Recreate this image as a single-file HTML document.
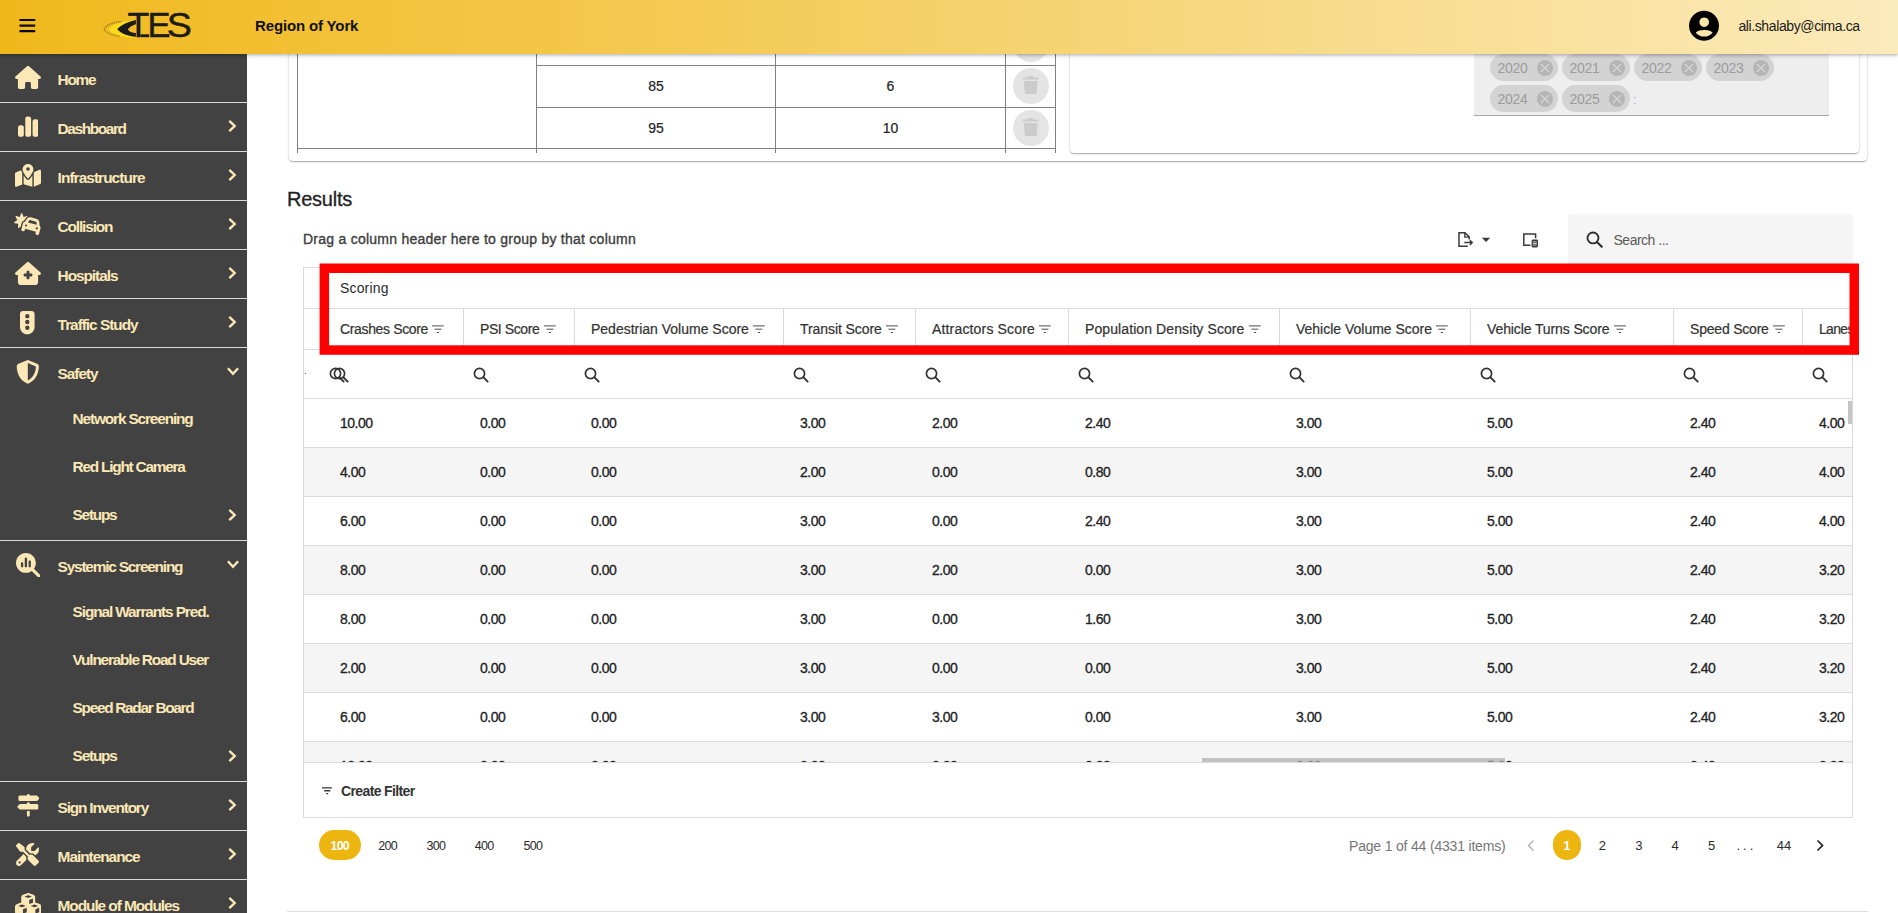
<!DOCTYPE html>
<html lang="en"><head><meta charset="utf-8"><title>TES - Region of York</title>
<style>
html,body{margin:0;padding:0}
body{width:1898px;height:913px;overflow:hidden;background:#fff;position:relative;font-family:"Liberation Sans",sans-serif;color:#333;font-size:14px}
.abs,header *,nav *,main *{box-sizing:border-box}
header{position:absolute;left:0;top:0;width:1898px;height:54px;background:linear-gradient(90deg,#f0b81a 0%,#fbeabb 100%);box-shadow:0 1px 4px rgba(0,0,0,.35);z-index:30}
header span,header svg,header div{position:absolute}
nav{position:absolute;left:0;top:54px;width:247px;height:859px;background:#424242;z-index:20;overflow:hidden}
nav ul{list-style:none;margin:0;padding:0}
nav li{position:relative;height:48px;color:#fff;font-weight:700;font-size:15px}
nav li.top{border-bottom:1px solid #dadada;height:49px}
nav li.grp{border-bottom:1px solid #dadada}
nav li span{position:absolute;white-space:nowrap}
nav li svg{position:absolute}
main{position:absolute;left:0;top:0;width:1898px;height:913px;overflow:hidden;z-index:1}
main span,main div,main svg,main table{position:absolute;white-space:nowrap}

#grid{left:303px;top:267px;width:1550px;height:551px;border:1px solid #dbdbdb}
#grid table{left:0;top:0;border-collapse:separate;border-spacing:0;table-layout:fixed;width:1548px;color:#2a2a2a;font-size:14px}
#grid td,#grid th{position:relative;padding:0 0 0 16px;border-bottom:1px solid #dbdbdb;text-align:left;font-weight:400;overflow:hidden;white-space:nowrap;vertical-align:middle}
#grid tr.h1 th,#grid tr.h2 th{height:41px}
#grid tr.h2 th{border-right:1px solid #dbdbdb;color:#333;-webkit-text-stroke:0.22px #333}
#grid tr.h2 th:last-child{border-right:0}
#grid tr.f td{height:49px}
#grid tr.d td{height:49px;color:#222;-webkit-text-stroke:0.3px #222}
#grid tr.alt td{background:#f5f5f5}
#grid .fi{position:static;display:inline-block;margin-left:4.200px;vertical-align:0.300px}
#grid .si{top:17.200px}
#grid th span,#grid td span{position:static}
</style></head><body>
<header>
<svg style="left:19px;top:17.700px" width="17" height="15" viewBox="0 0 17 15"><g fill="#0a0a0a"><rect x="0.400" y="0.900" width="15.900" height="2.200" rx="0.600"/><rect x="0.400" y="6.500" width="15.900" height="2.200" rx="0.600"/><rect x="0.400" y="12.100" width="15.900" height="2.200" rx="0.600"/></g></svg>
<svg style="left:100px;top:8px" width="96" height="36" viewBox="100 8 96 36" aria-label="TES logo">
<path d="M104.2 29.6 C105.5 25.2 113 21.9 121.5 21.6" fill="none" stroke="#6b5a10" stroke-width="1.6" stroke-dasharray="0.9 0.9" opacity=".75"/>
<path d="M104.2 29.6 C106.5 33.2 113 35.4 120 36.2" fill="none" stroke="#6b5a10" stroke-width="1.4" stroke-dasharray="0.9 0.9" opacity=".7"/>
<path d="M108.8 29.4 C112 24.6 122 21.4 135.8 20.1 C128 23.5 121 26.5 119 29.3 C121 32.6 128 35.6 135.8 37.6 C122 37.2 112 34.2 108.8 29.4 Z" fill="#fadc1c"/>
<path d="M117.2 29.3 C121.5 24.6 128.5 21.7 135.9 20 L135.9 24.2 C132 25.4 128.9 27.2 127.9 29.4 C129 31.6 132 32.6 135.9 33 L135.9 36.8 C128.5 36.3 121 33.6 117.2 29.3 Z" fill="#1b1b1b"/>
<rect x="140.4" y="34.3" width="8.8" height="2.9" fill="#1b1b1b"/>
<g font-family="Liberation Sans, sans-serif" font-size="34.3" fill="#1b1b1b" stroke="#1b1b1b" stroke-width="0.42">
<text transform="translate(127.4 37) scale(1.04 1)">T</text>
<text transform="translate(147.5 37) scale(1.01 1)">E</text>
<text transform="translate(166.8 37) scale(1.1 1)">S</text></g>
</svg>
<span style="left:255px;top:15.8px;font-size:15px;line-height:20px;font-weight:700;color:#111;letter-spacing:-0.143px;white-space:nowrap;">Region of York</span>
<svg style="left:1686px;top:8px" width="36" height="36" viewBox="1686 8 36 36"><path fill="#000" fill-rule="evenodd" d="M1704 10.8 a15 15 0 1 0 0.010 0 Z M1704.200 17.400 a4.800 4.800 0 1 0 0.010 0 Z M1695.800 32.700 C1697 30.700 1701.500 30 1704.200 30 C1706.900 30 1711.400 30.700 1712.600 32.700 C1710.800 35.100 1707.800 36.600 1704.200 36.600 C1700.600 36.600 1697.600 35.100 1695.800 32.700 Z"/></svg>
<span style="left:1738.4px;top:16.8px;font-size:14px;line-height:18px;color:#1a1a1a;letter-spacing:-0.385px;white-space:nowrap;">ali.shalaby@cima.ca</span>
</header>
<nav><ul>
<li class="top"><svg style="left:14.8px;top:12.3px" width="26" height="23.1" viewBox="0 0 576 512" fill="#fbe8b6"><path d="M575.800 255.500c0 18-15 32.100-32 32.100h-32l.7 160.200c0 2.700-.2 5.400-.5 8.100V472c0 22.100-17.900 40-40 40H456c-1.100 0-2.200 0-3.300-.1c-1.400 .1-2.800 .1-4.200 .1H416 392c-22.100 0-40-17.900-40-40V448 384c0-17.700-14.300-32-32-32H256c-17.700 0-32 14.300-32 32v64 24c0 22.100-17.900 40-40 40H160 128.100c-1.500 0-3-.1-4.500-.2c-1.200 .1-2.400 .2-3.600 .2H104c-22.100 0-40-17.900-40-40V360c0-.9 0-1.900 .1-2.800V287.600H32c-18 0-32-14-32-32.100c0-9 3-17 10-24L266.400 8c7-7 15-8 22-8s15 2 21 7L564.800 231.500c8 7 12 15 11 24z"/></svg><span style="left:57.6px;top:16px;font-size:15.4px;line-height:20px;font-weight:700;color:#fbe8b6;letter-spacing:-1.266px;">Home</span></li>
<li class="top"><svg style="left:17.8px;top:12.2px" width="20.4" height="23.3" viewBox="0 0 448 512" fill="#fbe8b6"><path d="M160 80c0-26.500 21.500-48 48-48h32c26.500 0 48 21.500 48 48V432c0 26.500-21.500 48-48 48H208c-26.500 0-48-21.500-48-48V80zM0 272c0-26.500 21.500-48 48-48H80c26.500 0 48 21.500 48 48V432c0 26.500-21.500 48-48 48H48c-26.500 0-48-21.500-48-48V272zM368 96h32c26.500 0 48 21.500 48 48V432c0 26.500-21.500 48-48 48H368c-26.500 0-48-21.500-48-48V144c0-26.500 21.500-48 48-48z"/></svg><span style="left:57.6px;top:16px;font-size:15.4px;line-height:20px;font-weight:700;color:#fbe8b6;letter-spacing:-1.377px;">Dashboard</span><svg style="left:227px;top:15.2px" width="11" height="16" viewBox="0 0 11 16"><path d="M2.300 2.900 L7.700 8 L2.300 13.100" fill="none" stroke="#fbe8b6" stroke-width="2.4" stroke-linecap="butt" stroke-linejoin="miter"/></svg></li>
<li class="top"><svg style="left:15px;top:11.8px" width="26" height="23.1" viewBox="0 0 576 512" fill="#fbe8b6"><path d="M408 120c0 54.600-73.100 151.900-105.200 192c-7.700 9.600-22 9.600-29.600 0C241.100 271.900 168 174.600 168 120C168 53.700 221.700 0 288 0s120 53.700 120 120zm8 80.400c3.500-6.900 6.700-13.800 9.600-20.600c.5-1.200 1-2.500 1.500-3.700l116-46.400C558.900 123.400 576 135 576 152V422.800c0 9.800-6 18.600-15.100 22.300L416 503V200.400zM137.600 138.300c2.400 14.100 7.200 28.300 12.800 41.500c2.900 6.800 6.100 13.700 9.600 20.600V451.800L32.900 502.700C17.100 509 0 497.400 0 480.400V209.600c0-9.800 6-18.600 15.100-22.300l122.600-49zM327.800 332c13.900-17.400 35.700-45.700 56.200-77V504.300L192 449.400V255c20.500 31.300 42.300 59.600 56.200 77c20.500 25.600 59.100 25.600 79.600 0zM288 152a40 40 0 1 0 0-80 40 40 0 1 0 0 80z"/></svg><span style="left:57.6px;top:16px;font-size:15.4px;line-height:20px;font-weight:700;color:#fbe8b6;letter-spacing:-0.933px;">Infrastructure</span><svg style="left:227px;top:15.2px" width="11" height="16" viewBox="0 0 11 16"><path d="M2.300 2.900 L7.700 8 L2.300 13.100" fill="none" stroke="#fbe8b6" stroke-width="2.4" stroke-linecap="butt" stroke-linejoin="miter"/></svg></li>
<li class="top"><svg style="left:13.5px;top:12px" width="28" height="22.4" viewBox="0 0 640 512" fill="#fbe8b6"><path d="M176 8c-6.600 0-12.400 4-14.900 10.100l-29.400 74L55.600 68.900c-6.300-1.900-13.100 .2-17.200 5.300s-4.600 12.200-1.400 17.900l39.500 69.100L10.900 206.400c-5.400 3.700-8 10.300-6.500 16.700s6.700 11.200 13.100 12.200l78.700 12.200L90.600 327c-.5 6.500 3.100 12.700 9 15.500s12.900 1.800 17.800-2.600l35.300-32.500 9.500-35.400 10.400-38.600c8-29.900 30.500-52.100 57.900-60.900l41-59.200c11.300-16.300 26.400-28.900 43.500-37.200c-.4-.6-.8-1.200-1.300-1.800c-4.100-5.100-10.900-7.200-17.200-5.300L220.300 92.100l-29.400-74C188.400 12 182.600 8 176 8zM367.700 161.500l135.600 36.300c6.500 1.800 11.300 7.400 11.800 14.200l4.600 56.500-201.500-54 32.200-46.600c3.800-5.600 10.800-8.100 17.300-6.400zm-69.900-30l-47.900 69.300c-21.600 3-40.300 18.600-46.300 41l-10.400 38.600-16.600 61.800-8.300 30.900c-4.600 17.100 5.600 34.600 22.600 39.200l15.500 4.100c17.100 4.600 34.600-5.600 39.200-22.600l8.300-30.900 247.300 66.300-8.300 30.900c-4.600 17.100 5.600 34.600 22.600 39.200l15.500 4.100c17.100 4.600 34.600-5.600 39.200-22.600l8.300-30.900L595 388l10.400-38.600c6-22.400-2.500-45.200-19.600-58.700l-6.800-84c-2.700-33.700-26.400-62-59-70.800L384.200 99.700c-32.700-8.800-67.400 4-86.500 31.800zm-17 131a24 24 0 1 1 -12.400 46.400 24 24 0 1 1 12.400-46.400zm217.900 83.200A24 24 0 1 1 545 358.100a24 24 0 1 1 -46.400-12.400z"/></svg><span style="left:57.6px;top:16px;font-size:15.4px;line-height:20px;font-weight:700;color:#fbe8b6;letter-spacing:-1.143px;">Collision</span><svg style="left:227px;top:15.2px" width="11" height="16" viewBox="0 0 11 16"><path d="M2.300 2.900 L7.700 8 L2.300 13.100" fill="none" stroke="#fbe8b6" stroke-width="2.4" stroke-linecap="butt" stroke-linejoin="miter"/></svg></li>
<li class="top"><svg style="left:15px;top:12px" width="26" height="23.1" viewBox="0 0 576 512" fill="#fbe8b6"><path d="M543.800 287.600c17 0 32-14 32-32.100c1-9-3-17-11-24L309.500 7c-6-5-14-7-21-7s-15 1-22 8L10 231.500c-7 7-10 15-10 24c0 18 14 32.100 32 32.100h32V448c0 35.300 28.700 64 64 64H448.500c35.500 0 64.200-28.800 64-64.300l-.7-160.200h32zM256 208c0-8.800 7.200-16 16-16h32c8.800 0 16 7.200 16 16v48h48c8.800 0 16 7.200 16 16v32c0 8.800-7.200 16-16 16H320v48c0 8.800-7.200 16-16 16H272c-8.800 0-16-7.200-16-16V320H208c-8.800 0-16-7.200-16-16V272c0-8.800 7.200-16 16-16h48V208z"/></svg><span style="left:57.6px;top:16px;font-size:15.4px;line-height:20px;font-weight:700;color:#fbe8b6;letter-spacing:-1.053px;">Hospitals</span><svg style="left:227px;top:15.2px" width="11" height="16" viewBox="0 0 11 16"><path d="M2.300 2.900 L7.700 8 L2.300 13.100" fill="none" stroke="#fbe8b6" stroke-width="2.4" stroke-linecap="butt" stroke-linejoin="miter"/></svg></li>
<li class="top"><svg style="left:20.1px;top:12.3px" width="14.6" height="23.4" viewBox="0 0 320 512" fill="#fbe8b6"><path d="M64 0C28.700 0 0 28.700 0 64V352c0 88.400 71.600 160 160 160s160-71.600 160-160V64c0-35.300-28.700-64-64-64H64zm96 416a48 48 0 1 1 0-96 48 48 0 1 1 0 96zm48-176a48 48 0 1 1 -96 0 48 48 0 1 1 96 0zm-48-80a48 48 0 1 1 0-96 48 48 0 1 1 0 96z"/></svg><span style="left:57.6px;top:16px;font-size:15.4px;line-height:20px;font-weight:700;color:#fbe8b6;letter-spacing:-1.017px;">Traffic Study</span><svg style="left:227px;top:15.2px" width="11" height="16" viewBox="0 0 11 16"><path d="M2.300 2.900 L7.700 8 L2.300 13.100" fill="none" stroke="#fbe8b6" stroke-width="2.4" stroke-linecap="butt" stroke-linejoin="miter"/></svg></li>
<li><svg style="left:16px;top:12px" width="23.6" height="23.6" viewBox="0 0 512 512" fill="#fbe8b6"><path d="M256 0c4.600 0 9.200 1 13.400 2.900L457.700 82.800c22 9.300 38.400 31 38.300 57.200c-.5 99.200-41.300 280.700-213.600 363.200c-16.700 8-36.100 8-52.800 0C57.300 420.700 16.500 239.200 16 140c-.1-26.200 16.300-47.900 38.300-57.200L242.700 2.900C246.800 1 251.400 0 256 0zm0 66.800V444.800C394 378 431.100 230.100 432 141.400L256 66.800l0 0z"/></svg><span style="left:57.6px;top:16px;font-size:15.4px;line-height:20px;font-weight:700;color:#fbe8b6;letter-spacing:-1.034px;">Safety</span><svg style="left:225px;top:18.0px" width="16" height="11" viewBox="0 0 16 11"><path d="M2.900 2.300 L8 7.700 L13.100 2.300" fill="none" stroke="#fbe8b6" stroke-width="2.4"/></svg></li>
<li><span style="left:72.6px;top:13px;font-size:15.4px;line-height:20px;font-weight:700;color:#fbe8b6;letter-spacing:-1.142px;">Network Screening</span></li>
<li><span style="left:72.6px;top:13px;font-size:15.4px;line-height:20px;font-weight:700;color:#fbe8b6;letter-spacing:-1.231px;">Red Light Camera</span></li>
<li class="grp" style="height:49px"><span style="left:72.6px;top:13px;font-size:15.4px;line-height:20px;font-weight:700;color:#fbe8b6;letter-spacing:-1.252px;">Setups</span><svg style="left:227px;top:15px" width="11" height="16" viewBox="0 0 11 16"><path d="M2.300 2.900 L7.700 8 L2.300 13.100" fill="none" stroke="#fbe8b6" stroke-width="2.4" stroke-linecap="butt" stroke-linejoin="miter"/></svg></li>
<li><svg style="left:15.7px;top:11.8px" width="24.4" height="24.4" viewBox="0 0 512 512" fill="#fbe8b6"><path d="M416 208c0 45.900-14.900 88.300-40 122.700L502.600 457.400c12.500 12.500 12.500 32.800 0 45.300s-32.800 12.500-45.300 0L330.700 376c-34.400 25.200-76.800 40-122.700 40C93.100 416 0 322.900 0 208S93.100 0 208 0S416 93.100 416 208zm-312 8v64c0 13.300 10.700 24 24 24s24-10.700 24-24V216c0-13.300-10.700-24-24-24s-24 10.700-24 24zm80-96V280c0 13.300 10.700 24 24 24s24-10.700 24-24V120c0-13.300-10.700-24-24-24s-24 10.700-24 24zm80 64v96c0 13.300 10.700 24 24 24s24-10.700 24-24V184c0-13.300-10.700-24-24-24s-24 10.700-24 24z"/></svg><span style="left:57.6px;top:16px;font-size:15.4px;line-height:20px;font-weight:700;color:#fbe8b6;letter-spacing:-1.199px;">Systemic Screening</span><svg style="left:225px;top:18.0px" width="16" height="11" viewBox="0 0 16 11"><path d="M2.900 2.300 L8 7.700 L13.100 2.300" fill="none" stroke="#fbe8b6" stroke-width="2.4"/></svg></li>
<li><span style="left:72.6px;top:13px;font-size:15.4px;line-height:20px;font-weight:700;color:#fbe8b6;letter-spacing:-1.113px;">Signal Warrants Pred.</span></li>
<li><span style="left:72.6px;top:13px;font-size:15.4px;line-height:20px;font-weight:700;color:#fbe8b6;letter-spacing:-1.194px;">Vulnerable Road User</span></li>
<li><span style="left:72.6px;top:13px;font-size:15.4px;line-height:20px;font-weight:700;color:#fbe8b6;letter-spacing:-1.297px;">Speed Radar Board</span></li>
<li class="grp" style="height:49px"><span style="left:72.6px;top:13px;font-size:15.4px;line-height:20px;font-weight:700;color:#fbe8b6;letter-spacing:-1.219px;">Setups</span><svg style="left:227px;top:15px" width="11" height="16" viewBox="0 0 11 16"><path d="M2.300 2.900 L7.700 8 L2.300 13.100" fill="none" stroke="#fbe8b6" stroke-width="2.4" stroke-linecap="butt" stroke-linejoin="miter"/></svg></li>
<li class="top"><svg style="left:16.5px;top:12.3px" width="22.7" height="22.7" viewBox="0 0 512 512" fill="#fbe8b6"><path d="M224 32H64C46.300 32 32 46.300 32 64v64c0 17.700 14.300 32 32 32H441.400c4.200 0 8.300-1.700 11.300-4.700l48-48c6.200-6.200 6.200-16.400 0-22.600l-48-48c-3-3-7.100-4.700-11.300-4.700H288c0-17.700-14.300-32-32-32s-32 14.300-32 32zM480 256c0-17.700-14.300-32-32-32H288V192H224v32H70.600c-4.200 0-8.300 1.700-11.300 4.700l-48 48c-6.200 6.200-6.200 16.400 0 22.600l48 48c3 3 7.100 4.700 11.300 4.700H448c17.700 0 32-14.300 32-32V256zM288 480V384H224v96c0 17.700 14.300 32 32 32s32-14.300 32-32z"/></svg><span style="left:57.6px;top:16px;font-size:15.4px;line-height:20px;font-weight:700;color:#fbe8b6;letter-spacing:-1.172px;">Sign Inventory</span><svg style="left:227px;top:15.2px" width="11" height="16" viewBox="0 0 11 16"><path d="M2.300 2.900 L7.700 8 L2.300 13.100" fill="none" stroke="#fbe8b6" stroke-width="2.4" stroke-linecap="butt" stroke-linejoin="miter"/></svg></li>
<li class="top"><svg style="left:16.3px;top:12.2px" width="23" height="23" viewBox="0 0 512 512" fill="#fbe8b6"><path d="M78.600 5C69.100-2.400 55.600-1.500 47 7L7 47c-8.500 8.500-9.400 22-2.100 31.600l80 104c4.500 5.900 11.600 9.400 19 9.400h54.100l109 109c-14.700 29-10 65.400 14.300 89.600l112 112c12.500 12.500 32.800 12.500 45.300 0l64-64c12.500-12.500 12.500-32.800 0-45.300l-112-112c-24.200-24.200-60.600-29-89.600-14.300l-109-109V104c0-7.500-3.500-14.500-9.400-19L78.600 5zM19.900 396.100C7.200 408.800 0 426.100 0 444.100C0 481.600 30.400 512 67.900 512c18 0 35.300-7.200 48-19.900L233.700 374.300c-7.800-20.900-9-43.600-3.600-65.100l-61.700-61.700L19.900 396.100zM512 144c0-10.500-1.100-20.700-3.200-30.500c-2.400-11.200-16.100-14.100-24.200-6l-63.900 63.900c-3 3-7.100 4.700-11.300 4.700H352c-8.800 0-16-7.200-16-16V102.600c0-4.200 1.700-8.300 4.700-11.300l63.900-63.900c8.100-8.100 5.200-21.800-6-24.200C388.700 1.100 378.500 0 368 0C288.500 0 224 64.500 224 144l0 .8 85.300 85.300c36-9.100 75.800 .5 104 28.700L429 274.500c49-23 83-72.800 83-130.500zM56 432a24 24 0 1 1 48 0 24 24 0 1 1 -48 0z"/></svg><span style="left:57.6px;top:16px;font-size:15.4px;line-height:20px;font-weight:700;color:#fbe8b6;letter-spacing:-1.021px;">Maintenance</span><svg style="left:227px;top:15.2px" width="11" height="16" viewBox="0 0 11 16"><path d="M2.300 2.900 L7.700 8 L2.300 13.100" fill="none" stroke="#fbe8b6" stroke-width="2.4" stroke-linecap="butt" stroke-linejoin="miter"/></svg></li>
<li class="top"><svg style="left:15px;top:12.5px" width="26.4" height="23.5" viewBox="0 0 576 512" fill="#fbe8b6"><path d="M290.800 48.600l78.400 29.700L288 109.500 206.800 78.300l78.400-29.700c1.800-.7 3.800-.7 5.700 0zM136 92.500V204.700c-1.300 .4-2.600 .8-3.900 1.300l-96 36.400C14.400 250.600 0 271.500 0 294.700V413.900c0 22.200 13.100 42.300 33.500 51.300l96 42.200c14.400 6.300 30.700 6.300 45.100 0L288 457.500l113.500 49.900c14.400 6.300 30.700 6.300 45.100 0l96-42.200c20.300-8.900 33.500-29.100 33.500-51.300V294.700c0-23.300-14.400-44.100-36.100-52.400l-96-36.400c-1.300-.5-2.600-.9-3.900-1.300V92.500c0-23.300-14.400-44.100-36.100-52.400l-96-36.400c-12.800-4.800-26.900-4.800-39.700 0l-96 36.400C150.400 48.400 136 69.300 136 92.500zM392 210.600l-82.400 31.200V152.600L392 121v89.600zM154.800 250.900l78.400 29.700L152 311.700 70.800 280.600l78.400-29.700c1.800-.7 3.800-.7 5.700 0zm18.800 204.400V354.800L256 323.200v95.900l-82.400 36.200zM421.200 250.900c1.800-.7 3.800-.7 5.700 0l78.400 29.700L424 311.700l-81.200-31.100 78.400-29.700zM523.200 421.200l-77.600 34.100V354.800L528 323.200v90.700c0 3.200-1.900 6-4.800 7.300z"/></svg><span style="left:57.6px;top:16px;font-size:15.4px;line-height:20px;font-weight:700;color:#fbe8b6;letter-spacing:-1.056px;">Module of Modules</span><svg style="left:227px;top:15.2px" width="11" height="16" viewBox="0 0 11 16"><path d="M2.300 2.900 L7.700 8 L2.300 13.100" fill="none" stroke="#fbe8b6" stroke-width="2.4" stroke-linecap="butt" stroke-linejoin="miter"/></svg></li>
</ul></nav>
<main>
<div style="left:289px;top:-10px;width:1578px;height:171px;border-radius:4px;box-shadow:0 2px 1px -1px rgba(0,0,0,.13),0 1px 1px 0 rgba(0,0,0,.1),0 1px 3px 0 rgba(0,0,0,.12),0 0 1.5px 0 rgba(0,0,0,.2);background:#fff"></div>
<div style="left:1070px;top:-10px;width:789px;height:163px;border-radius:4px;box-shadow:0 2px 1px -1px rgba(0,0,0,.13),0 1px 1px 0 rgba(0,0,0,.1),0 1px 3px 0 rgba(0,0,0,.12),0 0 1.5px 0 rgba(0,0,0,.2);background:#fff"></div>
<div style="left:297px;top:0;width:760px;height:153px;overflow:hidden">
<table style="left:0;top:23px;border-collapse:collapse;table-layout:fixed;width:759px;font-size:14px;color:#222;text-align:center;-webkit-text-stroke:0.2px #222"><colgroup><col style="width:239px"><col style="width:239px"><col style="width:230px"><col style="width:50px"></colgroup><tr style="height:42px"><td rowspan="3" style="border:1px solid #808080;padding:0 0 1.5px 0"></td><td style="border:1px solid #808080;padding:0 0 1.5px 0"></td><td style="border:1px solid #808080;padding:0 0 1.5px 0"></td><td style="border:1px solid #808080;padding:0 0 1.5px 0"></td></tr><tr style="height:42px"><td style="border:1px solid #808080;padding:0 0 1.5px 0">85</td><td style="border:1px solid #808080;padding:0 0 1.5px 0">6</td><td style="border:1px solid #808080;padding:0 0 1.5px 0"></td></tr><tr style="height:41px"><td style="border:1px solid #808080;padding:0.5px 0 0 0">95</td><td style="border:1px solid #808080;padding:0.5px 0 0 0">10</td><td style="border:1px solid #808080;padding:0 0 1.5px 0"></td></tr><tr style="height:42px"><td style="border:1px solid #808080;padding:0 0 1.5px 0"></td><td style="border:1px solid #808080;padding:0 0 1.5px 0"></td><td style="border:1px solid #808080;padding:0 0 1.5px 0"></td><td style="border:1px solid #808080;padding:0 0 1.5px 0"></td></tr></table>
</div>
<div style="left:1013px;top:26px;width:36px;height:36px;border-radius:50%;background:#e4e4e4"><svg style="left:0;top:0" width="36" height="36" viewBox="0 0 36 36"><g fill="#cbcbcb"><rect x="9.800" y="9.500" width="15.800" height="2.100" rx="0.800"/><rect x="14.900" y="8" width="5.500" height="2.200" rx="0.800"/><path d="M10.900 13 L24.500 13 L23.800 25 Q23.700 26.100 22.600 26.100 L13 26.100 Q11.900 26.100 11.800 25 Z"/></g></svg></div>
<div style="left:1013px;top:68px;width:36px;height:36px;border-radius:50%;background:#e4e4e4"><svg style="left:0;top:0" width="36" height="36" viewBox="0 0 36 36"><g fill="#cbcbcb"><rect x="9.800" y="9.500" width="15.800" height="2.100" rx="0.800"/><rect x="14.900" y="8" width="5.500" height="2.200" rx="0.800"/><path d="M10.900 13 L24.500 13 L23.800 25 Q23.700 26.100 22.600 26.100 L13 26.100 Q11.900 26.100 11.800 25 Z"/></g></svg></div>
<div style="left:1013px;top:110px;width:36px;height:36px;border-radius:50%;background:#e4e4e4"><svg style="left:0;top:0" width="36" height="36" viewBox="0 0 36 36"><g fill="#cbcbcb"><rect x="9.800" y="9.500" width="15.800" height="2.100" rx="0.800"/><rect x="14.900" y="8" width="5.500" height="2.200" rx="0.800"/><path d="M10.900 13 L24.500 13 L23.800 25 Q23.700 26.100 22.600 26.100 L13 26.100 Q11.900 26.100 11.800 25 Z"/></g></svg></div>
<div style="left:1474px;top:40px;width:355px;height:76px;background:#eeeeee;border-bottom:1px solid #a8a8a8"></div>
<div style="left:1490px;top:54.2px;width:68px;height:27px;border-radius:14px;background:#d3d3d3"><span style="left:7.5px;top:4.5px;font-size:14px;line-height:18px;color:#9b9b9b;letter-spacing:-0.289px;">2020</span><svg style="left:46.5px;top:5.5px" width="16" height="16" viewBox="0 0 16 16"><circle cx="8" cy="8" r="8" fill="#b5b5b5"/><path d="M4 4 L12 12 M12 4 L4 12" stroke="#d6d6d6" stroke-width="1.250" fill="none"/></svg></div>
<div style="left:1562px;top:54.2px;width:68px;height:27px;border-radius:14px;background:#d3d3d3"><span style="left:7.5px;top:4.5px;font-size:14px;line-height:18px;color:#9b9b9b;letter-spacing:-0.289px;">2021</span><svg style="left:46.5px;top:5.5px" width="16" height="16" viewBox="0 0 16 16"><circle cx="8" cy="8" r="8" fill="#b5b5b5"/><path d="M4 4 L12 12 M12 4 L4 12" stroke="#d6d6d6" stroke-width="1.250" fill="none"/></svg></div>
<div style="left:1634px;top:54.2px;width:68px;height:27px;border-radius:14px;background:#d3d3d3"><span style="left:7.5px;top:4.5px;font-size:14px;line-height:18px;color:#9b9b9b;letter-spacing:-0.289px;">2022</span><svg style="left:46.5px;top:5.5px" width="16" height="16" viewBox="0 0 16 16"><circle cx="8" cy="8" r="8" fill="#b5b5b5"/><path d="M4 4 L12 12 M12 4 L4 12" stroke="#d6d6d6" stroke-width="1.250" fill="none"/></svg></div>
<div style="left:1706px;top:54.2px;width:68px;height:27px;border-radius:14px;background:#d3d3d3"><span style="left:7.5px;top:4.5px;font-size:14px;line-height:18px;color:#9b9b9b;letter-spacing:-0.289px;">2023</span><svg style="left:46.5px;top:5.5px" width="16" height="16" viewBox="0 0 16 16"><circle cx="8" cy="8" r="8" fill="#b5b5b5"/><path d="M4 4 L12 12 M12 4 L4 12" stroke="#d6d6d6" stroke-width="1.250" fill="none"/></svg></div>
<div style="left:1490px;top:85.1px;width:68px;height:27px;border-radius:14px;background:#d3d3d3"><span style="left:7.5px;top:4.5px;font-size:14px;line-height:18px;color:#9b9b9b;letter-spacing:-0.289px;">2024</span><svg style="left:46.5px;top:5.5px" width="16" height="16" viewBox="0 0 16 16"><circle cx="8" cy="8" r="8" fill="#b5b5b5"/><path d="M4 4 L12 12 M12 4 L4 12" stroke="#d6d6d6" stroke-width="1.250" fill="none"/></svg></div>
<div style="left:1562px;top:85.1px;width:68px;height:27px;border-radius:14px;background:#d3d3d3"><span style="left:7.5px;top:4.5px;font-size:14px;line-height:18px;color:#9b9b9b;letter-spacing:-0.289px;">2025</span><svg style="left:46.5px;top:5.5px" width="16" height="16" viewBox="0 0 16 16"><circle cx="8" cy="8" r="8" fill="#b5b5b5"/><path d="M4 4 L12 12 M12 4 L4 12" stroke="#d6d6d6" stroke-width="1.250" fill="none"/></svg></div>
<span style="left:1633px;top:92px;font-size:12px;line-height:16px;color:#a9a9d8;">:</span>
<h2 style="left:287px;top:186px;font-size:20px;line-height:26px;color:#222;letter-spacing:-0.243px;margin:0;position:absolute;font-weight:400;-webkit-text-stroke:0.3px #222;">Results</h2>
<span style="left:303px;top:230.3px;font-size:14px;line-height:18px;color:#3d3d3d;letter-spacing:0.252px;-webkit-text-stroke:0.35px #3d3d3d;">Drag a column header here to group by that column</span>
<svg style="left:1456px;top:230px" width="20" height="20" viewBox="0 0 20 20"><g fill="none" stroke="#3a3a3a" stroke-width="1.5" stroke-linejoin="miter"><path d="M11.800 16.300 H3 V2.700 H9 L13.200 6.900 V9.600"/><path d="M8.800 2.900 V7.100 H13" stroke-width="1.300"/><path d="M8.300 12.600 H16.200 M13.800 10.200 L16.200 12.600 L13.800 15" /></g></svg>
<svg style="left:1481px;top:237px" width="10" height="6" viewBox="0 0 10 6"><path d="M0.800 0.800 H9.200 L5 5 Z" fill="#3a3a3a"/></svg>
<svg style="left:1521px;top:231px" width="20" height="20" viewBox="0 0 20 20"><g fill="none" stroke="#3a3a3a" stroke-width="1.500"><path d="M9.500 14.300 H2.800 V2.900 H14.600 V7.200"/><rect x="10.600" y="8.400" width="6.400" height="8" rx="1.400" fill="#3a3a3a" stroke="none"/><path d="M11.800 10.900 H15.800 M11.800 12.500 H15.800 M11.800 14.100 H15.800" stroke="#eee" stroke-width="0.800"/></g></svg>
<div style="left:1568px;top:214px;width:285px;height:54px;background:#f5f5f5;border-radius:4px 4px 0 0"></div>
<svg style="left:1585.800px;top:230.900px" width="17.200" height="17.200" viewBox="0 0 16 16" stroke="#2c2c2c"><circle cx="6.500" cy="6.500" r="5.100" fill="none" stroke-width="1.700"/><path d="M10.200 10.200 L15.200 15.200" stroke-width="1.900" fill="none"/></svg>
<span style="left:1613.5px;top:230.8px;font-size:14px;line-height:18px;color:#5a5a5a;letter-spacing:-0.492px;">Search ...</span>
<div id="grid">
<div style="left:0;top:0;width:1548px;height:495px;overflow:hidden;border-bottom:1px solid #dbdbdb">
<table><colgroup><col style="width:20px"><col style="width:140px"><col style="width:111px"><col style="width:209px"><col style="width:132px"><col style="width:153px"><col style="width:211px"><col style="width:191px"><col style="width:203px"><col style="width:129px"><col style="width:49px"></colgroup>
<tr class="h1"><th></th><th colspan="10"><span style="font-size:14px;line-height:18px;letter-spacing:0.162px;">Scoring</span></th></tr>
<tr class="h2"><th></th><th><span style="letter-spacing:-0.353px">Crashes Score</span><svg class="fi" width="12" height="9" viewBox="0 0 12 9"><path d="M0 0.900 H11.800 M2.400 4.200 H9.400 M4.800 7.500 H7" stroke="#505050" stroke-width="1" fill="none"/></svg></th><th><span style="letter-spacing:-0.403px">PSI Score</span><svg class="fi" width="12" height="9" viewBox="0 0 12 9"><path d="M0 0.900 H11.800 M2.400 4.200 H9.400 M4.800 7.500 H7" stroke="#505050" stroke-width="1" fill="none"/></svg></th><th><span style="letter-spacing:-0.004px">Pedestrian Volume Score</span><svg class="fi" width="12" height="9" viewBox="0 0 12 9"><path d="M0 0.900 H11.800 M2.400 4.200 H9.400 M4.800 7.500 H7" stroke="#505050" stroke-width="1" fill="none"/></svg></th><th><span style="letter-spacing:-0.072px">Transit Score</span><svg class="fi" width="12" height="9" viewBox="0 0 12 9"><path d="M0 0.900 H11.800 M2.400 4.200 H9.400 M4.800 7.500 H7" stroke="#505050" stroke-width="1" fill="none"/></svg></th><th><span style="letter-spacing:0.164px">Attractors Score</span><svg class="fi" width="12" height="9" viewBox="0 0 12 9"><path d="M0 0.900 H11.800 M2.400 4.200 H9.400 M4.800 7.500 H7" stroke="#505050" stroke-width="1" fill="none"/></svg></th><th><span style="letter-spacing:0.096px">Population Density Score</span><svg class="fi" width="12" height="9" viewBox="0 0 12 9"><path d="M0 0.900 H11.800 M2.400 4.200 H9.400 M4.800 7.500 H7" stroke="#505050" stroke-width="1" fill="none"/></svg></th><th><span style="letter-spacing:-0.01px">Vehicle Volume Score</span><svg class="fi" width="12" height="9" viewBox="0 0 12 9"><path d="M0 0.900 H11.800 M2.400 4.200 H9.400 M4.800 7.500 H7" stroke="#505050" stroke-width="1" fill="none"/></svg></th><th><span style="letter-spacing:-0.111px">Vehicle Turns Score</span><svg class="fi" width="12" height="9" viewBox="0 0 12 9"><path d="M0 0.900 H11.800 M2.400 4.200 H9.400 M4.800 7.500 H7" stroke="#505050" stroke-width="1" fill="none"/></svg></th><th><span style="letter-spacing:-0.205px">Speed Score</span><svg class="fi" width="12" height="9" viewBox="0 0 12 9"><path d="M0 0.900 H11.800 M2.400 4.200 H9.400 M4.800 7.500 H7" stroke="#505050" stroke-width="1" fill="none"/></svg></th><th><span style="letter-spacing:-0.692px">Lanes Score</span><svg class="fi" width="12" height="9" viewBox="0 0 12 9"><path d="M0 0.900 H11.800 M2.400 4.200 H9.400 M4.800 7.500 H7" stroke="#505050" stroke-width="1" fill="none"/></svg></th></tr>
<tr class="f"><td></td><td><svg class="si" style="left:5.4px" width="16" height="16" viewBox="0 0 16 16" stroke="#333"><circle cx="6.500" cy="6.500" r="5.100" fill="none" stroke-width="1.700"/><path d="M10.200 10.200 L15.200 15.200" stroke-width="1.900" fill="none"/></svg><svg class="si" style="left:8.8px" width="16" height="16" viewBox="0 0 16 16" stroke="#333"><circle cx="6.500" cy="6.500" r="5.100" fill="none" stroke-width="1.700"/><path d="M10.200 10.200 L15.200 15.200" stroke-width="1.900" fill="none"/></svg></td><td><svg class="si" style="left:9.3px" width="16" height="16" viewBox="0 0 16 16" stroke="#333"><circle cx="6.500" cy="6.500" r="5.100" fill="none" stroke-width="1.700"/><path d="M10.200 10.200 L15.200 15.200" stroke-width="1.900" fill="none"/></svg></td><td><svg class="si" style="left:9.3px" width="16" height="16" viewBox="0 0 16 16" stroke="#333"><circle cx="6.500" cy="6.500" r="5.100" fill="none" stroke-width="1.700"/><path d="M10.200 10.200 L15.200 15.200" stroke-width="1.900" fill="none"/></svg></td><td><svg class="si" style="left:9.3px" width="16" height="16" viewBox="0 0 16 16" stroke="#333"><circle cx="6.500" cy="6.500" r="5.100" fill="none" stroke-width="1.700"/><path d="M10.200 10.200 L15.200 15.200" stroke-width="1.900" fill="none"/></svg></td><td><svg class="si" style="left:9.3px" width="16" height="16" viewBox="0 0 16 16" stroke="#333"><circle cx="6.500" cy="6.500" r="5.100" fill="none" stroke-width="1.700"/><path d="M10.200 10.200 L15.200 15.200" stroke-width="1.900" fill="none"/></svg></td><td><svg class="si" style="left:9.3px" width="16" height="16" viewBox="0 0 16 16" stroke="#333"><circle cx="6.500" cy="6.500" r="5.100" fill="none" stroke-width="1.700"/><path d="M10.200 10.200 L15.200 15.200" stroke-width="1.900" fill="none"/></svg></td><td><svg class="si" style="left:9.3px" width="16" height="16" viewBox="0 0 16 16" stroke="#333"><circle cx="6.500" cy="6.500" r="5.100" fill="none" stroke-width="1.700"/><path d="M10.200 10.200 L15.200 15.200" stroke-width="1.900" fill="none"/></svg></td><td><svg class="si" style="left:9.3px" width="16" height="16" viewBox="0 0 16 16" stroke="#333"><circle cx="6.500" cy="6.500" r="5.100" fill="none" stroke-width="1.700"/><path d="M10.200 10.200 L15.200 15.200" stroke-width="1.900" fill="none"/></svg></td><td><svg class="si" style="left:9.3px" width="16" height="16" viewBox="0 0 16 16" stroke="#333"><circle cx="6.500" cy="6.500" r="5.100" fill="none" stroke-width="1.700"/><path d="M10.200 10.200 L15.200 15.200" stroke-width="1.900" fill="none"/></svg></td><td><svg class="si" style="left:9.3px" width="16" height="16" viewBox="0 0 16 16" stroke="#333"><circle cx="6.500" cy="6.500" r="5.100" fill="none" stroke-width="1.700"/><path d="M10.200 10.200 L15.200 15.200" stroke-width="1.900" fill="none"/></svg></td></tr>
<tr class="d"><td></td><td><span style="letter-spacing:-0.489px">10.00</span></td><td><span style="letter-spacing:-0.487px">0.00</span></td><td><span style="letter-spacing:-0.487px">0.00</span></td><td><span style="letter-spacing:-0.487px">3.00</span></td><td><span style="letter-spacing:-0.487px">2.00</span></td><td><span style="letter-spacing:-0.487px">2.40</span></td><td><span style="letter-spacing:-0.487px">3.00</span></td><td><span style="letter-spacing:-0.487px">5.00</span></td><td><span style="letter-spacing:-0.487px">2.40</span></td><td><span style="letter-spacing:-0.487px">4.00</span></td></tr>
<tr class="d alt"><td></td><td><span style="letter-spacing:-0.487px">4.00</span></td><td><span style="letter-spacing:-0.487px">0.00</span></td><td><span style="letter-spacing:-0.487px">0.00</span></td><td><span style="letter-spacing:-0.487px">2.00</span></td><td><span style="letter-spacing:-0.487px">0.00</span></td><td><span style="letter-spacing:-0.487px">0.80</span></td><td><span style="letter-spacing:-0.487px">3.00</span></td><td><span style="letter-spacing:-0.487px">5.00</span></td><td><span style="letter-spacing:-0.487px">2.40</span></td><td><span style="letter-spacing:-0.487px">4.00</span></td></tr>
<tr class="d"><td></td><td><span style="letter-spacing:-0.487px">6.00</span></td><td><span style="letter-spacing:-0.487px">0.00</span></td><td><span style="letter-spacing:-0.487px">0.00</span></td><td><span style="letter-spacing:-0.487px">3.00</span></td><td><span style="letter-spacing:-0.487px">0.00</span></td><td><span style="letter-spacing:-0.487px">2.40</span></td><td><span style="letter-spacing:-0.487px">3.00</span></td><td><span style="letter-spacing:-0.487px">5.00</span></td><td><span style="letter-spacing:-0.487px">2.40</span></td><td><span style="letter-spacing:-0.487px">4.00</span></td></tr>
<tr class="d alt"><td></td><td><span style="letter-spacing:-0.487px">8.00</span></td><td><span style="letter-spacing:-0.487px">0.00</span></td><td><span style="letter-spacing:-0.487px">0.00</span></td><td><span style="letter-spacing:-0.487px">3.00</span></td><td><span style="letter-spacing:-0.487px">2.00</span></td><td><span style="letter-spacing:-0.487px">0.00</span></td><td><span style="letter-spacing:-0.487px">3.00</span></td><td><span style="letter-spacing:-0.487px">5.00</span></td><td><span style="letter-spacing:-0.487px">2.40</span></td><td><span style="letter-spacing:-0.487px">3.20</span></td></tr>
<tr class="d"><td></td><td><span style="letter-spacing:-0.487px">8.00</span></td><td><span style="letter-spacing:-0.487px">0.00</span></td><td><span style="letter-spacing:-0.487px">0.00</span></td><td><span style="letter-spacing:-0.487px">3.00</span></td><td><span style="letter-spacing:-0.487px">0.00</span></td><td><span style="letter-spacing:-0.487px">1.60</span></td><td><span style="letter-spacing:-0.487px">3.00</span></td><td><span style="letter-spacing:-0.487px">5.00</span></td><td><span style="letter-spacing:-0.487px">2.40</span></td><td><span style="letter-spacing:-0.487px">3.20</span></td></tr>
<tr class="d alt"><td></td><td><span style="letter-spacing:-0.487px">2.00</span></td><td><span style="letter-spacing:-0.487px">0.00</span></td><td><span style="letter-spacing:-0.487px">0.00</span></td><td><span style="letter-spacing:-0.487px">3.00</span></td><td><span style="letter-spacing:-0.487px">0.00</span></td><td><span style="letter-spacing:-0.487px">0.00</span></td><td><span style="letter-spacing:-0.487px">3.00</span></td><td><span style="letter-spacing:-0.487px">5.00</span></td><td><span style="letter-spacing:-0.487px">2.40</span></td><td><span style="letter-spacing:-0.487px">3.20</span></td></tr>
<tr class="d"><td></td><td><span style="letter-spacing:-0.487px">6.00</span></td><td><span style="letter-spacing:-0.487px">0.00</span></td><td><span style="letter-spacing:-0.487px">0.00</span></td><td><span style="letter-spacing:-0.487px">3.00</span></td><td><span style="letter-spacing:-0.487px">3.00</span></td><td><span style="letter-spacing:-0.487px">0.00</span></td><td><span style="letter-spacing:-0.487px">3.00</span></td><td><span style="letter-spacing:-0.487px">5.00</span></td><td><span style="letter-spacing:-0.487px">2.40</span></td><td><span style="letter-spacing:-0.487px">3.20</span></td></tr>
<tr class="d alt"><td></td><td><span style="letter-spacing:-0.489px">10.00</span></td><td><span style="letter-spacing:-0.487px">0.00</span></td><td><span style="letter-spacing:-0.487px">0.00</span></td><td><span style="letter-spacing:-0.487px">3.00</span></td><td><span style="letter-spacing:-0.487px">0.00</span></td><td><span style="letter-spacing:-0.487px">0.00</span></td><td><span style="letter-spacing:-0.487px">3.00</span></td><td><span style="letter-spacing:-0.487px">5.00</span></td><td><span style="letter-spacing:-0.487px">2.40</span></td><td><span style="letter-spacing:-0.487px">3.20</span></td></tr>
</table>
<div style="left:1544px;top:133px;width:4px;height:23px;background:#c6c6c6"></div>
<div style="left:898px;top:489.500px;width:303px;height:5px;background:rgba(175,175,175,.72)"></div>
</div>
<div style="left:0.500px;top:104.600px;width:1.600px;height:1.200px;background:#555"></div>
<svg style="left:17.600px;top:518.800px" width="10.700" height="8" viewBox="0 0 12 9"><path d="M0 0.900 H11.800 M2.400 4.200 H9.400 M4.800 7.500 H7" stroke="#3a3a3a" stroke-width="1.500" fill="none"/></svg>
<span style="left:37px;top:513.5px;font-size:14px;line-height:18px;font-weight:700;letter-spacing:-0.623px;">Create Filter</span>
</div>
<div style="left:319px;top:830px;width:42px;height:30px;border-radius:15px;background:#edb50f"></div>
<span style="left:330.6px;top:838.1px;font-size:12.5px;line-height:16px;font-weight:700;color:#fff;letter-spacing:-0.886px;">100</span>
<span style="left:378.2px;top:838.1px;font-size:12.5px;line-height:16px;color:#2a2a2a;letter-spacing:-0.686px;">200</span>
<span style="left:426.4px;top:838.1px;font-size:12.5px;line-height:16px;color:#2a2a2a;letter-spacing:-0.686px;">300</span>
<span style="left:474.7px;top:838.1px;font-size:12.5px;line-height:16px;color:#2a2a2a;letter-spacing:-0.686px;">400</span>
<span style="left:523.4px;top:838.1px;font-size:12.5px;line-height:16px;color:#2a2a2a;letter-spacing:-0.686px;">500</span>
<span style="left:1349px;top:836.6px;font-size:14px;line-height:18px;color:#767676;letter-spacing:-0.184px;">Page 1 of 44 (4331 items)</span>
<svg style="left:1526px;top:839px" width="10" height="13" viewBox="0 0 10 13"><path d="M7.500 1.500 L2.500 6.500 L7.500 11.500" fill="none" stroke="#b8b8b8" stroke-width="1.500"/></svg>
<div style="left:1553px;top:830px;width:28px;height:30px;border-radius:14px;background:#edb50f"></div>
<span style="left:1563.3px;top:837.2px;font-size:13px;line-height:17px;font-weight:700;color:#fff;">1</span>
<span style="left:1598.7px;top:837.2px;font-size:13px;line-height:17px;color:#2a2a2a;">2</span>
<span style="left:1635.2px;top:837.2px;font-size:13px;line-height:17px;color:#2a2a2a;">3</span>
<span style="left:1671.4px;top:837.2px;font-size:13px;line-height:17px;color:#2a2a2a;">4</span>
<span style="left:1708.0px;top:837.2px;font-size:13px;line-height:17px;color:#2a2a2a;">5</span>
<span style="left:1736.5px;top:837.2px;font-size:13px;line-height:17px;color:#2a2a2a;letter-spacing:-0.312px;">. . .</span>
<span style="left:1776.8px;top:837.2px;font-size:13px;line-height:17px;color:#2a2a2a;letter-spacing:0.066px;">44</span>
<svg style="left:1815px;top:839px" width="10" height="13" viewBox="0 0 10 13"><path d="M2.500 1.500 L7.500 6.500 L2.500 11.500" fill="none" stroke="#222" stroke-width="1.700"/></svg>
<div style="left:287px;top:911px;width:1581px;height:1px;background:#dedede"></div>
<svg style="left:310px;top:255px;z-index:5" width="1560" height="110" viewBox="310 255 1560 110"><rect x="324.350" y="268.250" width="1529.900" height="81.800" fill="none" stroke="#ff0000" stroke-width="9.500"/></svg>
</main>
</body></html>
